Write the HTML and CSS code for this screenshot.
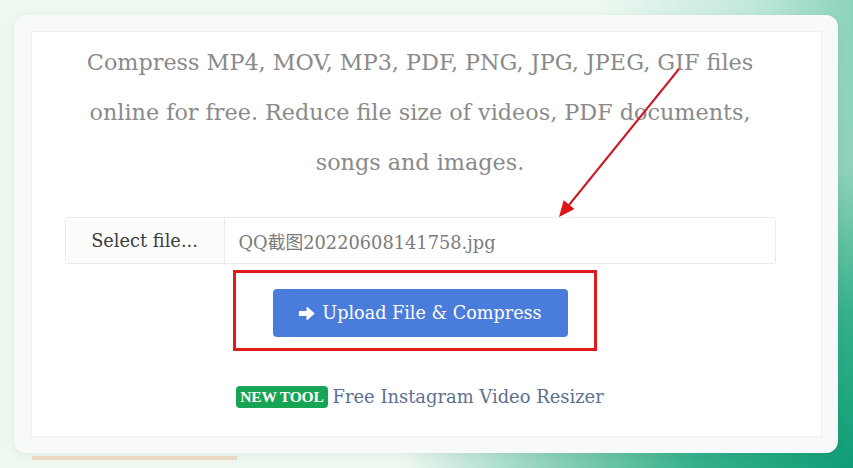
FILE: index.html
```html
<!DOCTYPE html>
<html lang="en">
<head>
<meta charset="utf-8">
<title>Compress files</title>
<link rel="stylesheet" href="styles.css">
</head>
<body>
<div class="stage">
  <div class="card">
    <div class="panel">
      <p class="lead">Compress MP4, MOV, MP3, PDF, PNG, JPG, JPEG, GIF files<br>online for free. Reduce file size of videos, PDF documents,<br>songs and images.</p>
      <div class="file-group">
        <span class="file-label">Select file...</span>
        <span class="file-name">QQ截图20220608141758.jpg</span>
      </div>
      <div class="action">
        <button class="upload" type="button"><svg class="ico" viewBox="0 0 16 16" width="17" height="17"><path d="M1.5 6.3h7.2V2.6L14.8 8l-6.1 5.4V9.7H1.5z" fill="#fff" stroke="#fff" stroke-width="1.4" stroke-linejoin="round"/></svg>Upload File &amp; Compress</button>
      </div>
      <p class="promo"><span class="badge">NEW TOOL</span><a class="promo-link" href="#">Free Instagram Video Resizer</a></p>
    </div>
  </div>
  <div class="peek"></div>
  <div class="mark"></div>
  <svg class="annot" viewBox="0 0 853 468" width="853" height="468">
    <line x1="679" y1="69" x2="569" y2="205" stroke="#cc1a24" stroke-width="2"/>
    <polygon points="559,217 574.5,209 563.7,200.2" fill="#e01414"/>
  </svg>
</div>
</body>
</html>
```

FILE: styles.css
```css
* { box-sizing: border-box; }
html, body { margin: 0; padding: 0; }
body {
  width: 853px;
  height: 468px;
  overflow: hidden;
  font-family: "DejaVu Serif", "Noto Sans CJK SC", serif;
}
.stage {
  position: relative;
  width: 853px;
  height: 468px;
  padding: 15px 0 0 14px;
  display: flex;
  flex-direction: column;
  background:
    radial-gradient(ellipse 62% 110% at 100% 100%, #0f9e76 0%, #35b08b 30%, #8fd2bb 58%, rgba(200,236,222,0) 85%),
    linear-gradient(to right, rgba(238,248,241,0) 70%, #c2e8da 88%, #8ad3b9 100%),
    #eef8f1;
}
.card {
  width: 824px;
  height: 438px;
  border-radius: 12px;
  background: #f7faf9;
  padding: 16px 16px 16px 17px;
  box-shadow: 0 2px 10px rgba(40, 80, 60, 0.08);
}
.panel {
  height: 100%;
  background: #ffffff;
  border: 1px solid #edf2f0;
  display: flex;
  flex-direction: column;
  align-items: center;
  padding: 5px 13px 0 0;
}
.lead {
  margin: 0;
  text-align: center;
  font-size: 22.3px;
  line-height: 50px;
  color: #8a8a8a;
  white-space: nowrap;
}
.file-group {
  margin-top: 30px;
  width: 711px;
  height: 47px;
  border: 1px solid #e8ecee;
  border-radius: 3px;
  display: flex;
  align-items: stretch;
  font-size: 17.8px;
}
.file-label {
  width: 159px;
  flex: none;
  display: flex;
  align-items: center;
  justify-content: center;
  background: #fcfcfc;
  border-right: 1px solid #e8ecee;
  color: #3c3c3c;
}
.file-name {
  display: flex;
  align-items: center;
  padding-left: 14px;
  color: #7b7b7b;
}
.action {
  margin-top: 25px;
}
.upload {
  width: 295px;
  height: 48px;
  border: 0;
  border-radius: 4px;
  background: #4a7ddb;
  color: #ffffff;
  font-family: "DejaVu Serif", serif;
  font-size: 17.6px;
  display: flex;
  align-items: center;
  justify-content: center;
  gap: 7px;
  padding: 0;
}
.ico { flex: none; }
.promo {
  margin: 48px 0 0;
  line-height: 24px;
  display: flex;
  align-items: center;
  gap: 5px;
}
.badge {
  background: #17a455;
  color: #ffffff;
  font-family: "Liberation Serif", serif;
  font-weight: bold;
  font-size: 15.5px;
  line-height: 16px;
  padding: 3px 4px;
  border-radius: 4px;
  letter-spacing: -0.2px;
}
.promo-link {
  color: #5c6f8f;
  font-size: 17.9px;
  text-decoration: none;
}
.peek {
  margin: 3px 0 0 18px;
  width: 205px;
  height: 4px;
  background: #ead8c0;
}
.mark {
  position: absolute;
  left: 233px;
  top: 270px;
  width: 364px;
  height: 81px;
  border: 3px solid #e01b1b;
}
.annot {
  position: absolute;
  left: 0;
  top: 0;
  pointer-events: none;
}
```
